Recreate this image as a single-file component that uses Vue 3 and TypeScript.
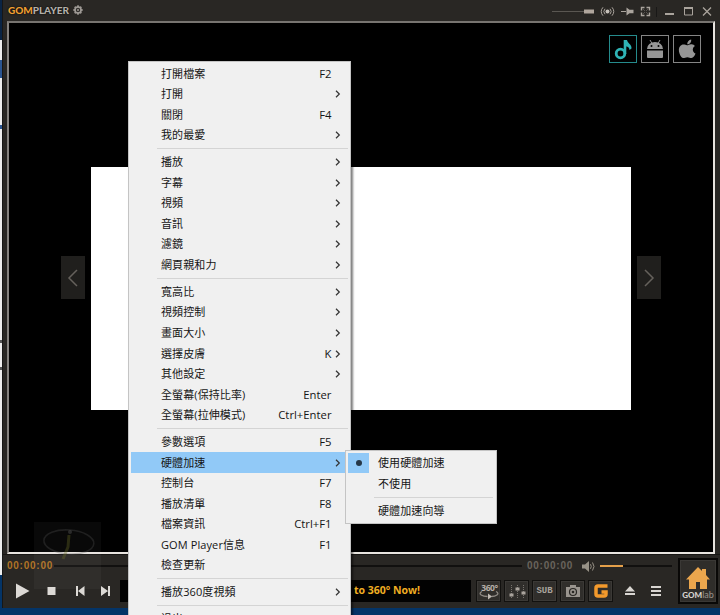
<script setup lang="ts">
interface Item {
  label: string
  key?: string
  sub?: boolean
  active?: boolean
}

const groups: Item[][] = [
  [
    { label: '打開檔案', key: 'F2' },
    { label: '打開', sub: true },
    { label: '關閉', key: 'F4' },
    { label: '我的最愛', sub: true },
  ],
  [
    { label: '播放', sub: true },
    { label: '字幕', sub: true },
    { label: '視頻', sub: true },
    { label: '音訊', sub: true },
    { label: '濾鏡', sub: true },
    { label: '網頁親和力', sub: true },
  ],
  [
    { label: '寬高比', sub: true },
    { label: '視頻控制', sub: true },
    { label: '畫面大小', sub: true },
    { label: '選擇皮膚', key: 'K', sub: true },
    { label: '其他設定', sub: true },
    { label: '全螢幕(保持比率)', key: 'Enter' },
    { label: '全螢幕(拉伸模式)', key: 'Ctrl+Enter' },
  ],
  [
    { label: '參數選項', key: 'F5' },
    { label: '硬體加速', sub: true, active: true },
    { label: '控制台', key: 'F7' },
    { label: '播放清單', key: 'F8' },
    { label: '檔案資訊', key: 'Ctrl+F1' },
    { label: 'GOM Player信息', key: 'F1' },
    { label: '檢查更新' },
  ],
  [{ label: '播放360度視頻', sub: true }],
  [{ label: '退出', key: 'Alt+F4' }],
]

const subGroups: Item[][] = [
  [{ label: '使用硬體加速', active: true }, { label: '不使用' }],
  [{ label: '硬體加速向導' }],
]

const gearTeeth: number[] = [0, 45, 90, 135, 180, 225, 270, 315]
</script>

<template>
  <div class="desktop">
    <div class="behind"></div>
    <div class="player">
      <header class="titlebar">
        <span class="brand"><b>GOM</b>PLAYER</span>
        <svg class="gear" width="10" height="10" viewBox="0 0 10 10">
          <g fill="#8f8b86">
            <rect v-for="a in gearTeeth" :key="a" x="4" y="0.300" width="2" height="2.200" :transform="`rotate(${a} 5 5)`" />
          </g>
          <circle cx="5" cy="5" r="3" fill="none" stroke="#a09c97" stroke-width="1.500" />
          <circle cx="5" cy="5" r="1.200" fill="#85817c" />
        </svg>
        <span class="grow"></span>
        <svg width="168" height="20" viewBox="0 0 168 20" fill="none" stroke="#aaa49d">
          <path d="M0 11.500h33" stroke="#5a5752" />
          <path d="M32 11.500h10" stroke="#b0a69d" stroke-width="4" />
          <circle cx="55.500" cy="11.500" r="2" fill="#c5c0b9" stroke="none" />
          <path d="M53 8.800a4 4 0 0 0 0 5.400M58 8.800a4 4 0 0 1 0 5.400M51 7.300a6.500 6.500 0 0 0 0 8.400M60 7.300a6.500 6.500 0 0 1 0 8.400" />
          <path d="M69 11.500h5" />
          <path d="M74.500 7.500v8l3-2.200h4V9.700h-4z" fill="#aaa49d" stroke="none" />
          <path d="M89.500 10.500v-3h3M94.500 7.500h3v3M97.500 12.500v3h-3M92.500 15.500h-3v-3" stroke-width="1.400" />
          <path d="M91.500 9.500l1 1M95.500 9.500l-1 1M91.500 13.500l1-1M95.500 13.500l-1-1" stroke-width=".7" />
          <path d="M104.500 7v10" stroke="#191817" />
          <path d="M113 14h9" stroke-width="2" />
          <path d="M132.500 8v7h8V8z" /><path d="M132 8h9" stroke-width="2" />
          <path d="M151 7.500l8 8M159 7.500l-8 8" stroke-width="1.300" />
        </svg>
      </header>

      <main class="screen">
        <div class="video"></div>
        <nav class="apps">
          <span class="app music">
            <svg width="26" height="26" viewBox="0 0 26 26" fill="none" stroke="#2fb3b5">
              <circle cx="10.500" cy="17.500" r="4.300" stroke-width="2.800" />
              <path d="M15 18V4" stroke-width="2.600" />
              <path d="M14 4h3c.3 3 5 4.500 4.500 8.500l-2 1.500c0-2.500-1.500-3.500-5.500-4z" fill="#2fb3b5" stroke="none" />
            </svg>
          </span>
          <span class="app">
            <svg width="26" height="26" viewBox="0 0 26 26" fill="#969696">
              <path d="M5 13a8 7 0 0 1 16 0zM5 14.500h16V21q0 1-1 1H6q-1 0-1-1z" />
              <path d="M8 4l2 3.500M18 4l-2 3.500" stroke="#969696" />
              <circle cx="9.500" cy="10" r="1" fill="#000" /><circle cx="16.500" cy="10" r="1" fill="#000" />
            </svg>
          </span>
          <span class="app">
            <svg width="26" height="26" viewBox="0 0 26 26" fill="#969696">
              <path d="M13 9.200c1.400 0 2.700-1.300 4.600-1 1.500.1 2.700.8 3.400 1.900-3.300 2-2.700 6.200.5 7.500-.8 2.200-2.200 4.500-4 4.500-1.600 0-2.300-.9-4.100-.9s-2.700.9-4.200.9C6.800 22.100 2.500 13.500 6.500 9.800c2.500-2.400 5-.6 6.500-.6z" />
              <path d="M13.200 8.300c-.2-2.500 1.600-4.500 4-4.900.3 2.700-1.500 4.900-4 4.900z" />
            </svg>
          </span>
        </nav>
        <span class="step prev">
          <svg width="12" height="18" viewBox="0 0 12 18"><path d="M10 1L2 9l8 8" /></svg>
        </span>
        <span class="step next">
          <svg width="12" height="18" viewBox="0 0 12 18"><path d="M2 1l8 8-8 8" /></svg>
        </span>
      </main>

      <footer class="panel">
        <div class="controls">
          <div class="seek">
            <span class="time now">00:00:00</span>
            <span class="track"></span>
            <span class="time total">00:00:00</span>
            <svg class="speaker" width="13" height="11" viewBox="0 0 13 11">
              <path d="M0 3.500h3L7 0v11L3 7.500H0z" fill="#989287" />
              <path d="M8.500 3.200q1.500 2.300 0 4.600M10.500 1.500q3 4 0 8" fill="none" stroke="#989287" />
            </svg>
            <span class="volume"><i></i></span>
          </div>
          <div class="buttons">
            <svg class="transport" width="114" height="16" viewBox="0 0 114 16" fill="#dcd9d5">
              <path d="M10 .5l13.500 7.500L10 15.500z" />
              <path d="M41.500 4h8v8h-8z" />
              <path d="M70 3h2v10h-2zM78.500 3v10L72 8z" />
              <path d="M102 3h2v10h-2zM95 3v10l7-5z" />
            </svg>
            <div class="ticker">to 360° Now!</div>
            <span class="btn">
              <svg width="22" height="20" viewBox="0 0 22 20" fill="none" stroke="#8f8a84">
                <path d="M4 10.500c-5 2.500 1 5 5.500 5M18 10.500c5 2.500-1 5-4.500 5" stroke-width="1.300" />
                <path d="M10 12.500v6l4-3z" fill="#c0bab3" stroke="none" />
                <text x="11.500" y="9.500" text-anchor="middle" class="deg" fill="#b5afa8" stroke="none">360°</text>
              </svg>
            </span>
            <span class="btn">
              <svg width="22" height="20" viewBox="0 0 22 20" fill="none" stroke="#77736e">
                <path d="M5.500 4v13M11.500 4v13M17.500 4v13" stroke-dasharray="1 1" />
                <path d="M3.500 14h4M9.500 8h4M15.500 12h4" stroke="#aaa49d" stroke-width="3" />
              </svg>
            </span>
            <span class="btn sub">SUB</span>
            <span class="btn">
              <svg width="16" height="14" viewBox="0 0 16 14">
                <path d="M1 3h4V1h6v2h4v10H1z" fill="#99948e" />
                <circle cx="8" cy="8" r="3.500" fill="#99948e" stroke="#292724" stroke-width="1.200" />
                <circle cx="8" cy="8" r="1.300" fill="#292724" />
              </svg>
            </span>
            <span class="btn">
              <svg width="14" height="14" viewBox="0 0 14 14" fill="none" stroke="#f49a2c" stroke-width="3.500">
                <path d="M13.500 2H4Q2 2 2 4v6q0 2 2 2h6q2 0 2-2V8H7.500" />
              </svg>
            </span>
            <svg class="tail" width="44" height="14" viewBox="0 0 44 14" fill="#d8d5d1">
              <path d="M6 2l5 5.500H1zM1 9h10v2H1z" />
              <path d="M27 2h10v2H27zM27 6h10v2H27zM27 10h10v2H27z" />
            </svg>
          </div>
        </div>
        <div class="home">
          <svg width="26" height="22" viewBox="0 0 26 22">
            <path d="M13 0l4 4V2h4v6l4 4.500h-3V22h-7v-7h-4v7H4v-9.500H1z" fill="#eba64d" />
          </svg>
          <span class="lab"><b>GOM</b>lab</span>
        </div>
      </footer>

      <svg class="mark" width="67" height="67" viewBox="0 0 67 67">
        <path d="M0 0h67v67H0z" fill="#fff" fill-opacity=".035" />
        <ellipse cx="35" cy="20" rx="25" ry="12" fill="none" stroke="#555" stroke-opacity=".3" stroke-width="1.600" transform="rotate(4 35 18)" />
        <circle cx="36" cy="10" r="2" fill="#555" fill-opacity=".45" />
        <path d="M35 13l-1 12-5 12" fill="none" stroke="#6d7028" stroke-opacity=".35" stroke-width="3" />
      </svg>
    </div>

    <div class="menu">
      <div v-for="(g, gi) in groups" :key="gi" class="group">
        <div v-for="it in g" :key="it.label" class="row" :class="{ active: it.active }">
          <span class="label">{{ it.label }}</span>
          <span class="key">{{ it.key }}</span>
          <svg class="arrow" width="6" height="8" viewBox="0 0 6 8">
            <path v-if="it.sub" d="M1 .8L4.300 4 1 7.200" />
          </svg>
        </div>
      </div>
    </div>

    <div class="menu submenu">
      <div v-for="(g, gi) in subGroups" :key="gi" class="group">
        <div v-for="it in g" :key="it.label" class="row">
          <span class="check" :class="{ on: it.active }"></span>
          <span class="label">{{ it.label }}</span>
        </div>
      </div>
    </div>
  </div>
</template>

<style>
body {
  overflow: hidden;
}
</style>

<style scoped>
* {
  box-sizing: border-box;
}
svg {
  display: block;
  flex: none;
}
.desktop {
  position: relative;
  width: 720px;
  height: 615px;
  overflow: hidden;
  display: flex;
  background: #043467;
  font-family: 'Open Sans', 'Noto Sans CJK TC', sans-serif;
}
.behind {
  width: 2px;
  background: linear-gradient(#0a2444 0 40px, #eee 40px 60px, #2a5591 60px 78px, #eee 78px 125px, #2a5591 125px 129px, #eee 129px 340px, #555 340px 343px, #eee 343px 367px, #555 367px 370px, #eee 370px 575px, #043467 575px);
}
.player {
  width: 718px;
  height: 608px;
  display: flex;
  flex-direction: column;
  background: #292724;
  border-left: 1px solid #171716;
}
.titlebar {
  height: 21px;
  flex: none;
  display: flex;
  padding-left: 5px;
}
.brand {
  font: 900 10px/20px Lato, sans-serif;
  color: #b3afa9;
  width: 63px;
  letter-spacing: -0.05px;
  white-space: nowrap;
  text-shadow: 0 0 2px #000;
}
.brand b {
  color: #f0a032;
  font-weight: 900;
}
.gear {
  margin: 5px 0 0 2px;
}
.grow {
  flex: 1;
}
.screen {
  position: relative;
  height: 533px;
  flex: none;
  margin: 0 5px 0 4px;
  background: #000;
  border: 2px solid #e8e4df;
  border-top-color: #777470;
  border-left-color: #85827f;
  padding: 144px 0 0 82px;
}
.video {
  width: 540px;
  height: 243px;
  background: #fff;
}
.apps {
  position: absolute;
  top: 12px;
  right: 12px;
  display: flex;
  gap: 4px;
}
.app {
  width: 28px;
  height: 28px;
  border: 1px solid #858585;
}
.music {
  border-color: #258b8c;
}
.step {
  position: absolute;
  top: 233px;
  width: 24px;
  height: 43px;
  background: #201f1d;
  display: flex;
  align-items: center;
  justify-content: center;
}
.step path {
  fill: none;
  stroke: #65615c;
  stroke-width: 1.5;
}
.prev {
  left: 52px;
}
.next {
  right: 52px;
}
.panel {
  flex: 1;
  display: flex;
  border-top: 1px solid #171614;
}
.controls {
  width: 672px;
  flex: none;
  padding-left: 3px;
}
.seek {
  height: 22px;
  display: flex;
  align-items: center;
}
.time {
  font: 700 10px/12px 'Liberation Sans', sans-serif;
  width: 47px;
  letter-spacing: 0.75px;
  padding-left: 1px;
  white-space: nowrap;
}
.now {
  color: #b07326;
}
.total {
  color: #69645d;
}
.track {
  width: 468px;
  height: 2px;
  margin: 0 4px 0 1px;
  background: #11100f;
}
.speaker {
  margin-left: 9px;
}
.volume {
  width: 72px;
  height: 2px;
  margin-left: 5px;
  background: #11100f;
}
.volume i {
  display: block;
  width: 23px;
  height: 2px;
  background: #e5a04a;
}
.buttons {
  display: flex;
  align-items: center;
  height: 28px;
}
.transport {
  margin-top: -1px;
}
.ticker {
  width: 351px;
  height: 22px;
  margin-right: 5px;
  padding-left: 234px;
  background: #020202;
  color: #f0ae22;
  font: 700 10.500px/20px 'Open Sans', sans-serif;
  white-space: nowrap;
}
.btn {
  width: 25px;
  height: 22px;
  margin-right: 3px;
  display: flex;
  align-items: center;
  justify-content: center;
  background: #302e2b;
  border: 1px solid #12110f;
  box-shadow: inset 0 0 0 1px #3b3936;
}
.btn svg {
  margin: 0 -1px;
}
.deg {
  font: 700 8.500px 'Open Sans', sans-serif;
  letter-spacing: -0.4px;
}
.sub {
  color: #aaa49d;
  font: 700 9px/20px 'Liberation Mono', monospace;
}
.tail {
  margin-left: 8px;
}
.home {
  width: 40px;
  height: 46px;
  flex: none;
  margin: 3px 0 0 3px;
  background: #2f2d2a;
  border: 2px solid #090807;
  box-shadow: inset 0 0 0 1px #3a3835;
  display: flex;
  flex-direction: column;
  align-items: center;
  padding-top: 7px;
}
.lab {
  color: #99938c;
  font: 400 9px/12px Lato, sans-serif;
}
.lab b {
  color: #d8d4cf;
  font-size: 8px;
  font-weight: 900;
}
.mark {
  position: absolute;
  left: 34px;
  top: 522px;
}
.menu {
  position: absolute;
  left: 128px;
  top: 61px;
  width: 222.500px;
  padding: 1.400px 1px 1px 2px;
  background: #f0f0f0;
  border: 1px solid #c4c4c4;
  box-shadow: 2px 2px 2px rgba(0, 0, 0, 0.5);
  color: #151515;
  font-size: 11px;
}
.group + .group::before {
  content: '';
  display: block;
  height: 1px;
  margin: 2.700px 1px 2.700px 26px;
  background: #d4d4d4;
}
.row {
  display: flex;
  align-items: center;
  height: 20.550px;
  line-height: 20px;
  padding-left: 30px;
  white-space: nowrap;
}
.row.active {
  background: #91c9f7;
}
.label {
  flex: 1;
  letter-spacing: 0.1px;
}
.key {
  font-size: 11.300px;
}
.arrow {
  margin: 0 8px 0 3px;
}
.arrow path {
  fill: none;
  stroke: #333;
  stroke-width: 1.200;
}
.submenu {
  left: 345px;
  top: 450px;
  width: 152px;
  height: 74px;
  padding: 2px;
  box-shadow: none;
}
.submenu .row {
  padding-left: 0;
}
.check {
  width: 21px;
  height: 20px;
  margin-right: 9px;
  display: flex;
  align-items: center;
  justify-content: center;
}
.check.on {
  background: #91c9f7;
}
.check.on::after {
  content: '';
  width: 6px;
  height: 6px;
  border-radius: 50%;
  background: #263747;
}
</style>
